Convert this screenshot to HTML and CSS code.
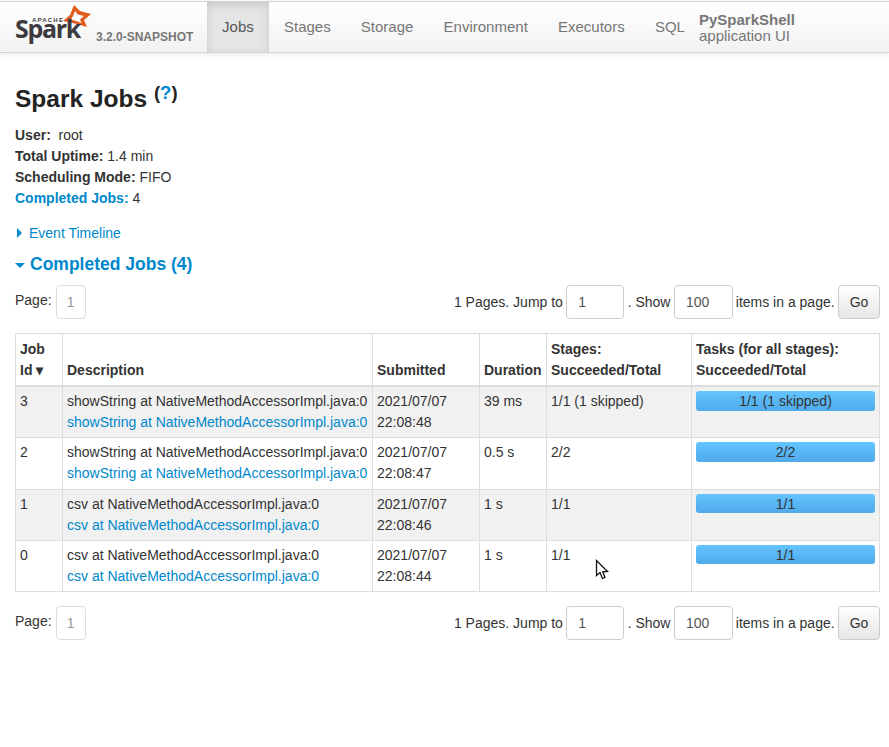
FILE: index.html
```html
<!DOCTYPE html>
<html lang="en">
<head>
    <meta charset="UTF-8">
    <meta name="viewport" content="width=device-width, initial-scale=1.0">
    <title>PySparkShell - Spark Jobs</title>
    <link rel="stylesheet" href="styles.css">
</head>
<body>
    <header class="navbar">
        <a class="brand" href="#">
            <span class="logo">
                <svg class="logo-star" width="32" height="30" viewBox="0 0 32 30">
                    <path fill-rule="evenodd" fill="#e25a1c" d="M13 3 L19 9 L30 12 L23 18 L26 25 L16 22 L2 19 L9 13 Z M14 9 L17 12.500 L23 14 L19 17.500 L20.500 21 L15 19 L10 17.500 L12 14 Z"/>
                </svg>
                <span class="logo-apache">APACHE</span>
                <span class="logo-spark">Spark</span>
            </span>
            <span class="version">3.2.0-SNAPSHOT</span>
        </a>
        <nav class="tabs">
            <a class="tab active" href="#">Jobs</a>
            <a class="tab" href="#">Stages</a>
            <a class="tab" href="#">Storage</a>
            <a class="tab" href="#">Environment</a>
            <a class="tab" href="#">Executors</a>
            <a class="tab" href="#">SQL</a>
        </nav>
        <p class="app-name"><strong>PySparkShell</strong><br>application UI</p>
    </header>

    <main class="content">
        <h3 class="page-title">Spark Jobs <sup class="help">(<a href="#">?</a>)</sup></h3>

        <ul class="summary">
            <li><strong>User:</strong>&nbsp; root</li>
            <li><strong>Total Uptime:</strong> 1.4 min</li>
            <li><strong>Scheduling Mode:</strong> FIFO</li>
            <li><a href="#"><strong>Completed Jobs:</strong></a> 4</li>
        </ul>

        <a class="timeline" href="#"><span class="arrow-right"></span>Event Timeline</a>

        <h4 class="section-title"><span class="arrow-down"></span>Completed Jobs (4)</h4>

        <div class="pager">
            <div class="pager-left">Page: <span class="page-box">1</span></div>
            <form class="pager-right">
                <span>1 Pages. Jump to</span>
                <input class="page-input" type="text" value="1">
                <span>. Show</span>
                <input class="size-input" type="text" value="100">
                <span>items in a page.</span>
                <button class="go" type="button">Go</button>
            </form>
        </div>

        <table class="jobs">
            <colgroup>
                <col class="c-id"><col class="c-desc"><col class="c-sub"><col class="c-dur"><col class="c-stages"><col class="c-tasks">
            </colgroup>
            <thead>
                <tr>
                    <th>Job<br>Id <span class="sort">▾</span></th>
                    <th>Description</th>
                    <th>Submitted</th>
                    <th>Duration</th>
                    <th>Stages:<br>Succeeded/Total</th>
                    <th>Tasks (for all stages):<br>Succeeded/Total</th>
                </tr>
            </thead>
            <tbody>
                <tr>
                    <td>3</td>
                    <td>showString at NativeMethodAccessorImpl.java:0<br><a href="#">showString at NativeMethodAccessorImpl.java:0</a></td>
                    <td>2021/07/07<br>22:08:48</td>
                    <td>39 ms</td>
                    <td>1/1 (1 skipped)</td>
                    <td><div class="progress">1/1 (1 skipped)</div></td>
                </tr>
                <tr>
                    <td>2</td>
                    <td>showString at NativeMethodAccessorImpl.java:0<br><a href="#">showString at NativeMethodAccessorImpl.java:0</a></td>
                    <td>2021/07/07<br>22:08:47</td>
                    <td>0.5 s</td>
                    <td>2/2</td>
                    <td><div class="progress">2/2</div></td>
                </tr>
                <tr>
                    <td>1</td>
                    <td>csv at NativeMethodAccessorImpl.java:0<br><a href="#">csv at NativeMethodAccessorImpl.java:0</a></td>
                    <td>2021/07/07<br>22:08:46</td>
                    <td>1 s</td>
                    <td>1/1</td>
                    <td><div class="progress">1/1</div></td>
                </tr>
                <tr>
                    <td>0</td>
                    <td>csv at NativeMethodAccessorImpl.java:0<br><a href="#">csv at NativeMethodAccessorImpl.java:0</a></td>
                    <td>2021/07/07<br>22:08:44</td>
                    <td>1 s</td>
                    <td>1/1</td>
                    <td><div class="progress">1/1</div></td>
                </tr>
            </tbody>
        </table>

        <div class="pager">
            <div class="pager-left">Page: <span class="page-box">1</span></div>
            <form class="pager-right">
                <span>1 Pages. Jump to</span>
                <input class="page-input" type="text" value="1">
                <span>. Show</span>
                <input class="size-input" type="text" value="100">
                <span>items in a page.</span>
                <button class="go" type="button">Go</button>
            </form>
        </div>
    </main>

    <!-- mouse pointer caught in the screenshot -->
    <svg class="cursor" width="16" height="22" viewBox="0 0 16 22">
        <path d="M1.500 1.500 L1.500 16.500 L5 13.500 L7.500 19.500 L10 18.500 L7.700 12.800 L12.500 12.500 Z" fill="#fff" stroke="#111" stroke-width="1.300"/>
    </svg>
</body>
</html>
```

FILE: styles.css
```css
body {
    font-family: "Liberation Sans", Arial, sans-serif;
    font-size: 14px;
    line-height: 21px;
    color: #333;
    background-color: #fff;
    margin: 0;
    padding: 0;
}
a {
    color: #0088cc;
    text-decoration: none;
}
.navbar {
    display: flex;
    height: 50px;
    margin-top: 1px;
    background: linear-gradient(to bottom, #ffffff, #f2f2f2);
    border-top: 1px solid #d4d4d4;
    border-bottom: 1px solid #d4d4d4;
    box-shadow: 0 1px 8px rgba(0, 0, 0, 0.1);
}
.brand {
    display: flex;
    width: 207px;
    flex-shrink: 0;
}
.logo {
    position: relative;
    display: block;
    width: 96px;
    height: 50px;
}
.logo-star {
    position: absolute;
    left: 61px;
    top: 0;
}
.logo-apache {
    position: absolute;
    left: 32px;
    top: 14px;
    font-size: 6px;
    line-height: 8px;
    font-weight: bold;
    letter-spacing: 1.200px;
    color: #3c3a3e;
}
.logo-spark {
    position: absolute;
    left: 15px;
    top: 10px;
    font-family: "Open Sans", "Liberation Sans", sans-serif;
    font-size: 25px;
    line-height: 32px;
    font-weight: bold;
    letter-spacing: -1.300px;
    color: #3c3a3e;
}
.version {
    font-size: 12px;
    font-weight: bold;
    line-height: 16px;
    margin-top: 27px;
    color: #777;
}
.tabs {
    display: flex;
}
.tab {
    padding: 0 15.100px;
    font-size: 15px;
    line-height: 49px;
    color: #777;
}
.tab.active {
    color: #555;
    background-color: #e5e5e5;
    box-shadow: inset 0 3px 8px rgba(0, 0, 0, 0.125);
}
.app-name {
    margin: 10px 0 0 -1px;
    font-size: 15px;
    line-height: 16px;
    color: #777;
}
.content {
    padding: 0 9px 0 15px;
}
.page-title {
    font-size: 24.500px;
    line-height: 40px;
    font-weight: bold;
    color: #222;
    margin: 26px 0 6px 0;
}
.help {
    font-size: 18.500px;
    line-height: 0;
    vertical-align: 8px;
}
.summary {
    list-style: none;
    margin: 0 0 14px 0;
    padding: 0;
}
.timeline {
    display: block;
    height: 21px;
}
.arrow-right {
    display: inline-block;
    width: 0;
    height: 0;
    margin: 0 7px 0 2px;
    border-left: 5px solid #0088cc;
    border-top: 5px solid transparent;
    border-bottom: 5px solid transparent;
}
.arrow-down {
    display: inline-block;
    width: 0;
    height: 0;
    margin-right: 5px;
    vertical-align: middle;
    border-top: 5px solid #0088cc;
    border-left: 5px solid transparent;
    border-right: 5px solid transparent;
}
.section-title {
    font-size: 17.500px;
    line-height: 21px;
    font-weight: bold;
    color: #0088cc;
    margin: 10px 0 10px 0;
}
.pager {
    display: flex;
    justify-content: space-between;
    align-items: flex-start;
    height: 34px;
}
.pager-left {
    display: flex;
    gap: 4px;
    line-height: 30px;
}
.page-box {
    display: block;
    width: 28px;
    height: 32px;
    line-height: 32px;
    text-align: center;
    color: #999;
    border: 1px solid #ddd;
    border-radius: 4px;
}
.pager-right {
    display: flex;
    gap: 3.400px;
    line-height: 34px;
    margin: 0;
}
.pager-right input {
    box-sizing: border-box;
    height: 34px;
    padding: 0 11px;
    font-family: inherit;
    font-size: 14px;
    color: #555;
    border: 1px solid #ccc;
    border-radius: 4px;
}
.page-input {
    width: 58px;
}
.size-input {
    width: 59px;
    margin-right: -0.500px;
}
.go {
    box-sizing: border-box;
    width: 42px;
    height: 34px;
    padding: 0;
    font-family: inherit;
    font-size: 14px;
    color: #333;
    background: linear-gradient(to bottom, #ffffff, #e6e6e6);
    border: 1px solid #ccc;
    border-radius: 4px;
}
.jobs {
    box-sizing: border-box;
    width: 864px;
    table-layout: fixed;
    border-collapse: collapse;
    margin: 14px 0 13.500px 0;
    border: 1px solid #ddd;
}
.c-id { width: 47px; }
.c-desc { width: 310px; }
.c-sub { width: 107px; }
.c-dur { width: 67px; }
.c-stages { width: 145px; }
.c-tasks { width: 188px; }
.jobs th, .jobs td {
    padding: 4px;
    text-align: left;
    vertical-align: top;
    white-space: nowrap;
    border: 1px solid #ddd;
}
.jobs td {
    padding-bottom: 4.300px;
}
.jobs th {
    padding-top: 5px;
    vertical-align: bottom;
    font-weight: bold;
    border-bottom-width: 2px;
}
.jobs tbody tr:nth-child(odd) td {
    background-color: #f1f1f1;
}
.sort {
    font-size: 14px;
}
.progress {
    height: 19.500px;
    line-height: 21px;
    text-align: center;
    color: #333;
    background: linear-gradient(to bottom, #64c5ff, #4fa9ea);
    border-radius: 3px;
}
.cursor {
    position: absolute;
    left: 595px;
    top: 559px;
}
```
